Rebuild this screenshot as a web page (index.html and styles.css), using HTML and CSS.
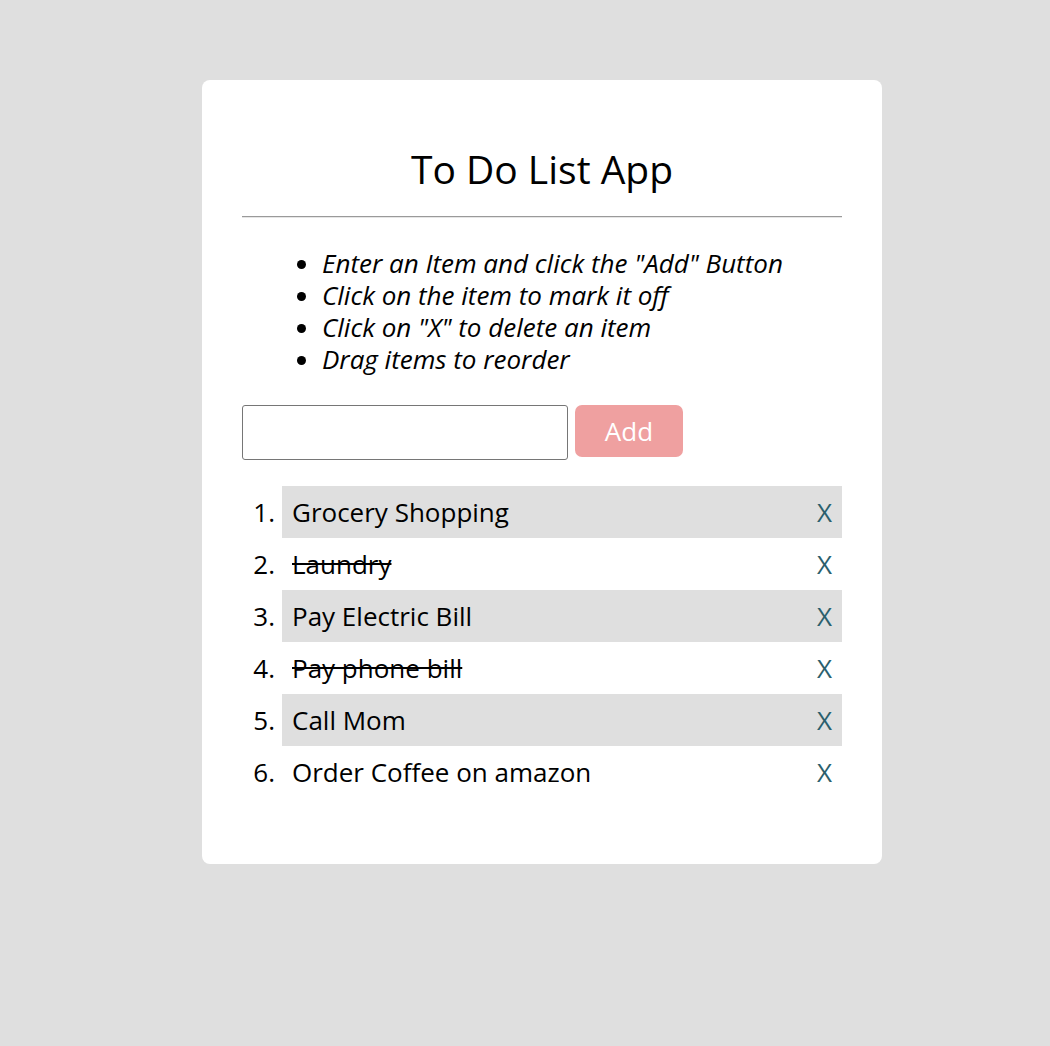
FILE: index.html
```html
<!DOCTYPE html>
<html lang="en">
<head>
<meta charset="utf-8">
<title>To Do List App</title>
<link rel="stylesheet" href="styles.css">
</head>
<body>
<main class="card">
  <h1 class="title">To Do List App</h1>
  <hr class="rule">
  <ul class="help">
    <li>Enter an Item and click the "Add" Button</li>
    <li>Click on the item to mark it off</li>
    <li>Click on "X" to delete an item</li>
    <li>Drag items to reorder</li>
  </ul>
  <form class="entry">
    <input class="entry-input" type="text">
    <button class="entry-btn" type="button">Add</button>
  </form>
  <ol class="todos">
    <li class="todo shaded"><span class="todo-text">Grocery Shopping</span><span class="del">X</span></li>
    <li class="todo"><span class="todo-text done">Laundry</span><span class="del">X</span></li>
    <li class="todo shaded"><span class="todo-text">Pay Electric Bill</span><span class="del">X</span></li>
    <li class="todo"><span class="todo-text done">Pay phone bill</span><span class="del">X</span></li>
    <li class="todo shaded"><span class="todo-text">Call Mom</span><span class="del">X</span></li>
    <li class="todo"><span class="todo-text">Order Coffee on amazon</span><span class="del">X</span></li>
  </ol>
</main>
</body>
</html>
```

FILE: styles.css
```css
html, body {
  margin: 0;
  padding: 0;
}
body {
  background: #dfdfdf;
  font-family: "Open Sans", "Liberation Sans", sans-serif;
  color: #000;
  padding-left: 34px;
}
.card {
  width: 600px;
  margin: 80px auto 0;
  padding: 40px 40px 40px;
  background: #fff;
  border-radius: 8px;
}
.title {
  margin: 24px 0 23px;
  font-size: 39px;
  font-weight: 400;
  line-height: 49px;
  text-align: center;
}
.rule {
  margin: 0;
  height: 0;
  border: 0;
  border-top: 1px solid #9a9a9a;
  border-bottom: 1px solid #e6e6e6;
}
.help {
  margin: 29px 0 30px;
  padding-left: 80px;
  font-size: 26px;
  font-style: italic;
  line-height: 32px;
}
.entry {
  display: flex;
  align-items: flex-start;
  gap: 7px;
  margin: 0 0 26px;
}
.entry-input {
  box-sizing: border-box;
  width: 326px;
  height: 55px;
  margin: 0;
  border: 1px solid #767676;
  border-radius: 3px;
  font-size: 26px;
  font-family: inherit;
}
.entry-btn {
  box-sizing: border-box;
  width: 108px;
  height: 52px;
  margin: 0;
  border: 0;
  border-radius: 7px;
  background: #efa0a0;
  color: #fff;
  font-family: inherit;
  font-size: 26px;
  line-height: 32px;
}
.todos {
  margin: 0 0 26px;
  padding-left: 40px;
  font-size: 26px;
  line-height: 32px;
  list-style: none;
  counter-reset: n;
}
.todo {
  display: flex;
  justify-content: space-between;
  padding: 10px;
  counter-increment: n;
  position: relative;
}
.todo::before {
  content: counter(n) ".";
  position: absolute;
  right: 100%;
  margin-right: 7px;
}
.shaded {
  background: #dfdfdf;
}
.done {
  text-decoration: line-through;
}
.del {
  color: #2b5f6d;
}
```
